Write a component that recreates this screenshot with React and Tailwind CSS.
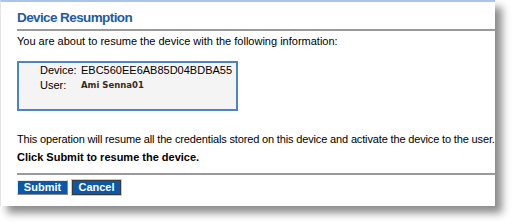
export default function App() {
  return (
    <div className="w-[513px] h-[223px] bg-white font-['Liberation_Sans',Arial,sans-serif] text-[11px] text-black">
      <div className="w-[495px] h-[206px] bg-white border-t-2 border-t-[#a9c6ea] border-l border-l-[#e4e4e4] shadow-[7px_7px_8px_rgba(0,0,0,0.45)] pl-[16px] pt-[8px] flex flex-col">
        <h1 className="text-[13.5px] font-bold text-[#1e5ba6] leading-[16px] tracking-[-0.6px]">Device Resumption</h1>
        <div className="h-[2px] bg-[#9a9a9a] mt-[3px]" />
        <p className="mt-[3px] leading-[14px] whitespace-nowrap">You are about to resume the device with the following information:</p>
        <div className="mt-[13px] w-[221px] h-[50px] bg-[#f4f4f4] border-2 border-[#4a86c6] pl-[21px]">
          <div className="flex items-center h-[14px]">
            <span className="w-[41px]">Device:</span>
            <span>EBC560EE6AB85D04BDBA55</span>
          </div>
          <div className="flex items-center h-[16px]">
            <span className="w-[41px]">User:</span>
            <span className="font-['DejaVu_Sans',sans-serif] font-bold text-[8.5px] text-[#3b2a22]">Ami Senna01</span>
          </div>
        </div>
        <p className="mt-[21px] leading-[14px] whitespace-nowrap tracking-[-0.15px]">This operation will resume all the credentials stored on this device and activate the device to the user.</p>
        <p className="mt-[4px] leading-[14px] font-bold">Click Submit to resume the device.</p>
        <div className="h-[2px] bg-[#9a9a9a] mt-[9px]" />
        <div className="flex gap-[4px] mt-[5px]">
          <button className="w-[51px] h-[15px] bg-[#0b58a8] text-white font-bold text-[11px] leading-none border border-[#e6e6e6] border-r-[#8a8a8a] border-b-[#8a8a8a]">Submit</button>
          <button className="w-[49px] h-[15px] bg-[#0b58a8] text-white font-bold text-[11px] leading-none border border-[#3a3a3a] outline outline-1 outline-[#c8c8c8]">Cancel</button>
        </div>
      </div>
    </div>
  );
}
